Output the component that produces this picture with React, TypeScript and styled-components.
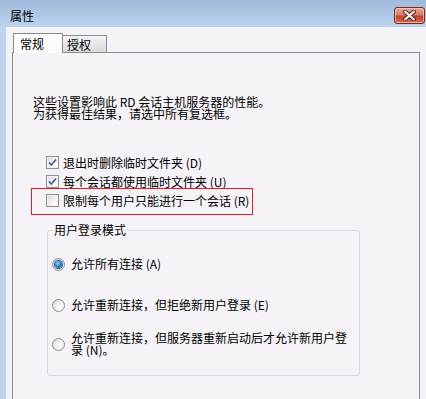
import React from "react";
import styled, { createGlobalStyle } from "styled-components";

const GlobalStyle = createGlobalStyle`
  html, body {
    margin: 0;
    padding: 0;
    overflow: hidden;
    background: #f5f3f7;
  }
  body {
    font-family: "Noto Sans CJK SC", "Liberation Sans", sans-serif;
    font-size: 12px;
    color: #000;
  }
`;

const Window = styled.div`
  width: 426px;
  height: 399px;
  display: flex;
  flex-direction: column;
  overflow: hidden;
`;

const TitleBar = styled.div`
  height: 27px;
  box-sizing: border-box;
  padding: 4px 1px 0 10px;
  display: flex;
  align-items: center;
  background: linear-gradient(#9fbadb, #bcd3ee);
`;

const Title = styled.span`
  font-size: 12px;
  line-height: 14px;
  color: #000;
`;

const CloseButton = styled.div`
  margin-left: auto;
  width: 31px;
  height: 17px;
  box-sizing: border-box;
  border: 1px solid #7a2a22;
  border-radius: 3px;
  background: linear-gradient(#e6a89a 0%, #d67d6b 45%, #c4442c 55%, #d2714f 100%);
  box-shadow: inset 0 0 0 1px rgba(255, 220, 210, 0.55);
  display: flex;
  align-items: center;
  justify-content: center;
`;

const Frame = styled.div`
  flex: 1;
  display: flex;
  min-height: 0;
`;

const LeftEdge = styled.div`
  width: 6px;
  background: #bed4ee;
`;

const Client = styled.div`
  flex: 1;
  display: flex;
  flex-direction: column;
  padding-top: 6px;
  background: #f5f3f7;
`;

const TabRow = styled.div`
  display: flex;
  align-items: flex-end;
  height: 20px;
  margin-left: 7px;
  margin-bottom: -1px;
  position: relative;
  z-index: 1;
`;

const Tab = styled.div<{ $active?: boolean; $width: number }>`
  width: ${(p) => p.$width}px;
  height: ${(p) => (p.$active ? 20 : 17)}px;
  margin-bottom: ${(p) => (p.$active ? 0 : 1)}px;
  box-sizing: border-box;
  border: 1px solid #898c95;
  border-bottom: none;
  ${(p) => (p.$active ? "" : "border-left: none;")}
  padding-left: ${(p) => (p.$active ? 6 : 4)}px;
  padding-top: ${(p) => (p.$active ? 3 : 2)}px;
  font-size: 12px;
  line-height: 13px;
  background: ${(p) =>
    p.$active ? "#fbfbfc" : "linear-gradient(#f3f3f3, #e6e6e6 50%, #dadada)"};
`;

const Panel = styled.div`
  flex: 1;
  margin-left: 6px;
  width: 408px;
  box-sizing: border-box;
  border: 1px solid #898c95;
  border-bottom: none;
  background: #f5f3f7;
  padding: 43px 0 0 20px;
`;

const Description = styled.p`
  margin: 0;
  line-height: 12px;
  white-space: nowrap;
`;

const CheckList = styled.div`
  margin: 33px 0 0 13px;
  display: flex;
  flex-direction: column;
`;

const CheckRow = styled.div<{ $marked?: boolean }>`
  position: relative;
  height: 19px;
  display: flex;
  align-items: center;
  gap: 4px;
  line-height: 12px;

  ${(p) =>
    p.$marked
      ? `&::after {
    content: "";
    position: absolute;
    left: -15px;
    top: -3px;
    width: 222px;
    height: 27px;
    box-sizing: border-box;
    border: 1px solid #f01818;
  }`
      : ""}
`;

const Box = styled.span`
  width: 13px;
  height: 13px;
  box-sizing: border-box;
  border: 1px solid #8e8f8f;
  background: linear-gradient(135deg, #d9d9d9, #f7f7f7 70%, #ffffff);
  box-shadow: inset 0 0 0 1px #f2f2f2;
  display: flex;
  align-items: center;
  justify-content: center;
  flex: none;
`;

const Group = styled.fieldset`
  margin: 14px 0 0 14px;
  width: 313px;
  box-sizing: border-box;
  min-width: 0;
  padding: 0 0 19px 4px;
  border: 1px solid #d3dbe3;
  border-radius: 3px;
`;

const Legend = styled.legend`
  margin-left: 1px;
  padding: 0 1px;
  line-height: 12px;
`;

const RadioRow = styled.div<{ $top: number }>`
  margin-top: ${(p) => p.$top}px;
  display: flex;
  align-items: center;
  gap: 6px;
  line-height: 12px;
  min-height: 14px;
`;

const RadioText = styled.span`
  white-space: nowrap;
`;

const Radio = styled.span<{ $checked?: boolean }>`
  width: 13px;
  height: 13px;
  box-sizing: border-box;
  border-radius: 50%;
  border: 1px solid #8d8f92;
  background: radial-gradient(circle at 65% 65%, #ffffff 0%, #f0f0f0 40%, #d2d2d2 100%);
  display: flex;
  align-items: center;
  justify-content: center;
  flex: none;

  &::after {
    content: "";
    display: ${(p) => (p.$checked ? "block" : "none")};
    width: 7px;
    height: 7px;
    border-radius: 50%;
    background: radial-gradient(circle at 40% 35%, #8fd3f8 0%, #2a8acb 45%, #0d4f86 100%);
    box-shadow: 0 0 0 1px #1d5f93;
  }
`;

function Check({ checked }: { checked?: boolean }) {
  return (
    <Box>
      {checked && (
        <svg width="9" height="9" viewBox="0 0 9 9">
          <path d="M1 4.5 L3.3 7 L8 1.5" fill="none" stroke="#4b62a0" strokeWidth="1.8" />
        </svg>
      )}
    </Box>
  );
}

function CloseIcon() {
  return (
    <svg width="13" height="11" viewBox="0 0 13 11">
      <path
        d="M2 1.5 L11 9.5 M11 1.5 L2 9.5"
        stroke="#5a1e18"
        strokeWidth="4"
        strokeLinecap="round"
      />
      <path
        d="M2 1.5 L11 9.5 M11 1.5 L2 9.5"
        stroke="#ffffff"
        strokeWidth="2"
        strokeLinecap="round"
      />
    </svg>
  );
}

export default function App() {
  return (
    <>
      <GlobalStyle />
      <Window>
        <TitleBar>
          <Title>属性</Title>
          <CloseButton>
            <CloseIcon />
          </CloseButton>
        </TitleBar>
        <Frame>
          <LeftEdge />
          <Client>
            <TabRow>
              <Tab $active $width={50}>常规</Tab>
              <Tab $width={44}>授权</Tab>
            </TabRow>
            <Panel>
              <Description>
                这些设置影响此 RD 会话主机服务器的性能。
                <br />
                为获得最佳结果，请选中所有复选框。
              </Description>
              <CheckList>
                <CheckRow>
                  <Check checked />
                  <span>退出时删除临时文件夹 (D)</span>
                </CheckRow>
                <CheckRow>
                  <Check checked />
                  <span>每个会话都使用临时文件夹 (U)</span>
                </CheckRow>
                <CheckRow $marked>
                  <Check />
                  <span>限制每个用户只能进行一个会话 (R)</span>
                </CheckRow>
              </CheckList>
              <Group>
                <Legend>用户登录模式</Legend>
                <RadioRow $top={21}>
                  <Radio $checked />
                  <RadioText>允许所有连接 (A)</RadioText>
                </RadioRow>
                <RadioRow $top={27}>
                  <Radio />
                  <RadioText>允许重新连接，但拒绝新用户登录 (E)</RadioText>
                </RadioRow>
                <RadioRow $top={20}>
                  <Radio />
                  <RadioText>
                    允许重新连接，但服务器重新启动后才允许新用户登
                    <br />
                    录 (N)。
                  </RadioText>
                </RadioRow>
              </Group>
            </Panel>
          </Client>
        </Frame>
      </Window>
    </>
  );
}
